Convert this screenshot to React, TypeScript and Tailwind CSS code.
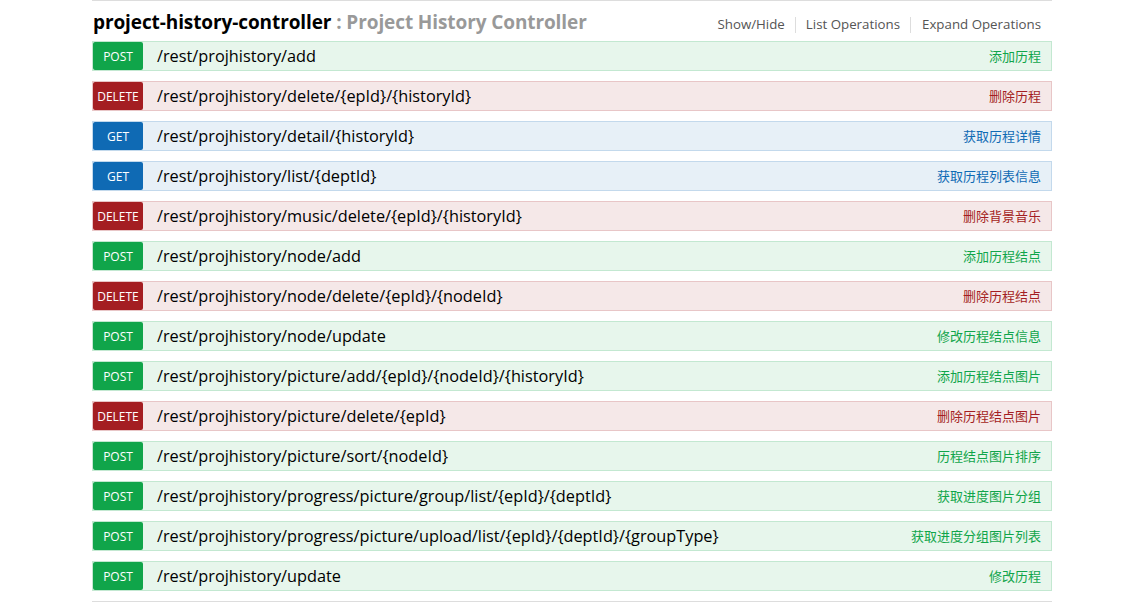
import React from "react";

type Op = { m: "POST" | "DELETE" | "GET"; path: string; desc: string };

const ops: Op[] = [
  { m: "POST", path: "/rest/projhistory/add", desc: "添加历程" },
  { m: "DELETE", path: "/rest/projhistory/delete/{epId}/{historyId}", desc: "删除历程" },
  { m: "GET", path: "/rest/projhistory/detail/{historyId}", desc: "获取历程详情" },
  { m: "GET", path: "/rest/projhistory/list/{deptId}", desc: "获取历程列表信息" },
  { m: "DELETE", path: "/rest/projhistory/music/delete/{epId}/{historyId}", desc: "删除背景音乐" },
  { m: "POST", path: "/rest/projhistory/node/add", desc: "添加历程结点" },
  { m: "DELETE", path: "/rest/projhistory/node/delete/{epId}/{nodeId}", desc: "删除历程结点" },
  { m: "POST", path: "/rest/projhistory/node/update", desc: "修改历程结点信息" },
  { m: "POST", path: "/rest/projhistory/picture/add/{epId}/{nodeId}/{historyId}", desc: "添加历程结点图片" },
  { m: "DELETE", path: "/rest/projhistory/picture/delete/{epId}", desc: "删除历程结点图片" },
  { m: "POST", path: "/rest/projhistory/picture/sort/{nodeId}", desc: "历程结点图片排序" },
  { m: "POST", path: "/rest/projhistory/progress/picture/group/list/{epId}/{deptId}", desc: "获取进度图片分组" },
  { m: "POST", path: "/rest/projhistory/progress/picture/upload/list/{epId}/{deptId}/{groupType}", desc: "获取进度分组图片列表" },
  { m: "POST", path: "/rest/projhistory/update", desc: "修改历程" },
];

const styles = {
  POST: { row: "bg-[#e7f6ec] border-[#c3e8d1]", badge: "bg-[#10a54a]", text: "text-[#10a54a]" },
  DELETE: { row: "bg-[#f5e8e8] border-[#e8c6c7]", badge: "bg-[#a41e22]", text: "text-[#a41e22]" },
  GET: { row: "bg-[#e7f0f7] border-[#c3d9ec]", badge: "bg-[#0f6ab4]", text: "text-[#0f6ab4]" },
};

const font = { fontFamily: '"Open Sans", "Noto Sans CJK SC", sans-serif' };

export default function App() {
  return (
    <div className="w-[1147px] h-[606px] bg-white overflow-hidden" style={font}>
      <div className="w-[960px] ml-[92px] border-t border-[#dddddd]">
        <div className="h-[40px] flex items-center justify-between">
          <h2 className="text-[19px] font-bold text-black leading-none pl-[1px] pt-[2px] tracking-[-0.1px]">
            project-history-controller
            <span className="text-[#999999]"> : Project History Controller</span>
          </h2>
          <div className="flex items-center text-[13.3px] text-[#555555] pr-[11px] pt-[8px]">
            <span className="pr-[10px]">Show/Hide</span>
            <span className="w-px h-[16px] bg-[#dddddd]" />
            <span className="px-[10px]">List Operations</span>
            <span className="w-px h-[16px] bg-[#dddddd]" />
            <span className="pl-[11px]">Expand Operations</span>
          </div>
        </div>
        <div className="flex flex-col gap-[10px] pb-[10px] border-b border-[#dddddd]">
          {ops.map((o, i) => {
            const s = styles[o.m];
            return (
              <div key={i} className={`h-[30px] border flex items-center ${s.row}`}>
                <span
                  className={`w-[50px] h-[28px] pt-[2px] rounded-[2px] flex items-center justify-center text-white text-[12px] ${s.badge}`}
                >
                  {o.m}
                </span>
                <span className="pl-[14px] text-[16.3px] text-black flex-1 whitespace-nowrap">{o.path}</span>
                <span className={`pr-[10px] pt-[1px] text-[13px] ${s.text}`}>{o.desc}</span>
              </div>
            );
          })}
        </div>
      </div>
    </div>
  );
}
